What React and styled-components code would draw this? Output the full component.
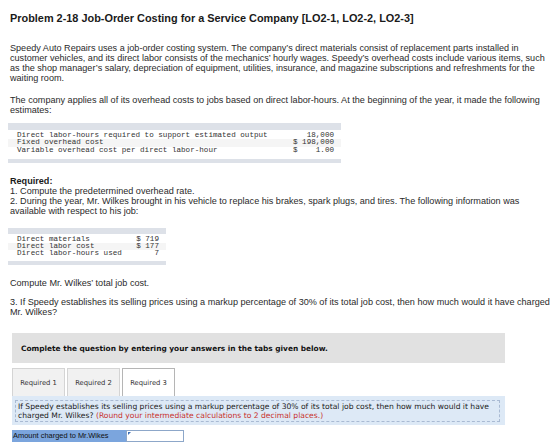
import React from "react";
import styled, { createGlobalStyle } from "styled-components";

const Global = createGlobalStyle`
  html, body { margin: 0; padding: 0; background: #fff; overflow: hidden; }
  body { font-family: "Liberation Sans", Arial, sans-serif; color: #222; }
`;

const Page = styled.div`
  width: 560px;
  padding: 12px 0 0 10px;
  box-sizing: border-box;
`;

const Title = styled.h1`
  margin: 0 0 18px 0;
  font-size: 10.9px;
  line-height: 13px;
  font-weight: bold;
  color: #1a1a1a;
  white-space: nowrap;
`;

const Para = styled.p`
  margin: ${(p) => p.$mt ?? 0}px 0 0 0;
  font-size: 9.1px;
  line-height: 10px;
  color: #2a2a2a;
  white-space: nowrap;
`;

const Bold = styled.div`
  margin-top: ${(p) => p.$mt ?? 0}px;
  font-weight: bold;
  font-size: 9.1px;
  line-height: 10px;
  color: #1a1a1a;
`;

const DataTable = styled.div`
  width: ${(p) => p.$w}px;
  margin: ${(p) => p.$mt}px 0 0 -2px;
  font-family: "Liberation Mono", "Courier New", monospace;
  font-size: 7.6px;
  color: #333;
`;

const Bar = styled.div`
  height: ${(p) => p.$h}px;
  background: #dde1e8;
`;

const Row = styled.div`
  display: flex;
  justify-content: space-between;
  padding: 0 7px 0 9px;
  line-height: ${(p) => p.$lh}px;
  background: ${(p) => (p.$alt ? "#f5f5f5" : "#fff")};
  white-space: pre;
`;

const Spacer = styled.div`
  height: ${(p) => p.$h}px;
`;

const GrayBox = styled.div`
  margin: 16px 0 0 2px;
  width: 493px;
  height: 30px;
  background: #e1e1e1;
  display: flex;
  align-items: center;
  padding-left: 9px;
  box-sizing: border-box;
  font-family: "DejaVu Sans", Verdana, sans-serif;
  font-weight: bold;
  font-size: 7.4px;
  color: #111;
`;

const Tabs = styled.div`
  display: flex;
  gap: 2px;
  margin: 5px 0 0 2px;
`;

const Tab = styled.div`
  width: 53px;
  height: 28px;
  box-sizing: border-box;
  display: flex;
  align-items: center;
  justify-content: center;
  font-family: "DejaVu Sans", Verdana, sans-serif;
  font-size: 6.8px;
  color: #333;
  background: ${(p) => (p.$active ? "#fff" : "#f1f1f1")};
  border: 1px solid ${(p) => (p.$active ? "#b5b5b5" : "#d4d4d4")};
  border-bottom: none;
`;

const InfoBox = styled.div`
  margin: 0 0 0 2px;
  width: 493px;
  box-sizing: border-box;
  background: #dde9f6;
  padding: 4px 5px 3px 3px;
`;

const InfoInner = styled.div`
  border: 1px dashed #a9bad3;
  padding: 1px 2px;
  font-family: "DejaVu Sans", Verdana, sans-serif;
  font-size: 7.6px;
  line-height: 9px;
  color: #222;
  white-space: nowrap;
`;

const Red = styled.span`
  color: #c8322d;
`;

const AnswerRow = styled.div`
  display: flex;
  margin: 5px 0 0 2px;
`;

const Label = styled.div`
  width: 114px;
  height: 12px;
  background: #7ba5dd;
  font-size: 7.45px;
  line-height: 12px;
  padding-left: 1px;
  box-sizing: border-box;
  color: #111;
  white-space: nowrap;
`;

const InputWrap = styled.div`
  position: relative;
  width: 58px;
  height: 12px;
  box-sizing: border-box;
  background: #fff;
  border: 1px solid #8da7c9;
`;

const Corner = styled.div`
  position: absolute;
  left: 1px;
  top: 1px;
  width: 0;
  height: 0;
  border-top: 3px solid #3c6fb6;
  border-right: 3px solid transparent;
`;

export default function App() {
  return (
    <Page>
      <Global />
      <Title>Problem 2-18 Job-Order Costing for a Service Company [LO2-1, LO2-2, LO2-3]</Title>
      <Para>
        Speedy Auto Repairs uses a job-order costing system. The company’s direct materials consist of replacement parts installed in
        <br />
        customer vehicles, and its direct labor consists of the mechanics’ hourly wages. Speedy’s overhead costs include various items, such
        <br />
        as the shop manager’s salary, depreciation of equipment, utilities, insurance, and magazine subscriptions and refreshments for the
        <br />
        waiting room.
      </Para>
      <Para $mt={12}>
        The company applies all of its overhead costs to jobs based on direct labor-hours. At the beginning of the year, it made the following
        <br />
        estimates:
      </Para>
      <DataTable $w={333} $mt={8}>
        <Bar $h={6.5} />
        <Spacer $h={2} />
        <Row $lh={7.5}><span>Direct labor-hours required to support estimated output</span><span>   18,000</span></Row>
        <Row $lh={7.5} $alt><span>Fixed overhead cost</span><span>$ 198,000</span></Row>
        <Row $lh={7.5}><span>Variable overhead cost per direct labor-hour</span><span>$    1.00</span></Row>
        <Spacer $h={5} />
        <Bar $h={4} />
      </DataTable>
      <Bold $mt={13}>Required:</Bold>
      <Para>
        1. Compute the predetermined overhead rate.
        <br />
        2. During the year, Mr. Wilkes brought in his vehicle to replace his brakes, spark plugs, and tires. The following information was
        <br />
        available with respect to his job:
      </Para>
      <DataTable $w={158} $mt={12}>
        <Bar $h={6} />
        <Spacer $h={1.5} />
        <Row $lh={7}><span>Direct materials</span><span>$ 719</span></Row>
        <Row $lh={7} $alt><span>Direct labor cost</span><span>$ 177</span></Row>
        <Row $lh={7}><span>Direct labor-hours used</span><span>7</span></Row>
        <Spacer $h={4.5} />
        <Bar $h={4} />
      </DataTable>
      <Para $mt={13}>Compute Mr. Wilkes’ total job cost.</Para>
      <Para $mt={9}>
        3. If Speedy establishes its selling prices using a markup percentage of 30% of its total job cost, then how much would it have charged
        <br />
        Mr. Wilkes?
      </Para>
      <GrayBox>Complete the question by entering your answers in the tabs given below.</GrayBox>
      <Tabs>
        <Tab>Required 1</Tab>
        <Tab>Required 2</Tab>
        <Tab $active>Required 3</Tab>
      </Tabs>
      <InfoBox>
        <InfoInner>
          If Speedy establishes its selling prices using a markup percentage of 30% of its total job cost, then how much would it have
          <br />
          charged Mr. Wilkes? <Red>(Round your intermediate calculations to 2 decimal places.)</Red>
        </InfoInner>
      </InfoBox>
      <AnswerRow>
        <Label>Amount charged to Mr.Wikes</Label>
        <InputWrap>
          <Corner />
        </InputWrap>
      </AnswerRow>
    </Page>
  );
}
